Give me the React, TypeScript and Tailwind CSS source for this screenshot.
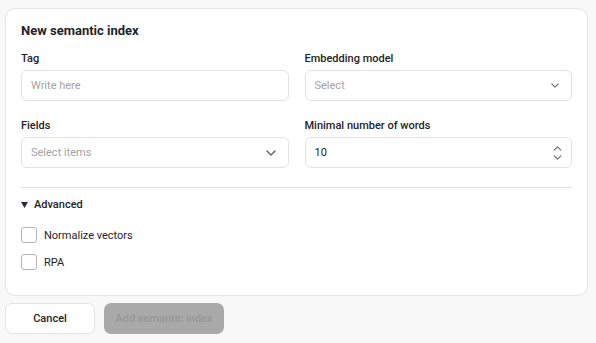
import React from "react";

const Chevron = ({ w, h, up = false, color = "#6b6b6b", sw = 1.5 }: { w: number; h: number; up?: boolean; color?: string; sw?: number }) => (
  <svg width={w} height={h} viewBox="0 0 10 6" fill="none" style={{ display: "block" }}>
    <path d={up ? "M1 5L5 1L9 5" : "M1 1L5 5L9 1"} stroke={color} strokeWidth={sw} strokeLinecap="round" strokeLinejoin="round" />
  </svg>
);

export default function App() {
  return (
    <div className="min-h-[343px] w-[596px] bg-[#f8f8f8] pt-[8px] pl-[5px] pr-[8px]" style={{ fontFamily: "Roboto, 'Noto Sans', sans-serif" }}>
      <div className="rounded-[10px] border border-[#e4e4e4] bg-white px-[15px] pt-[12px] pb-[25px]">
        <div className="text-[13px] font-bold leading-5 text-[#1f2328]">New semantic index</div>
        <div className="mt-[10px] grid grid-cols-2 gap-x-[16px] gap-y-[17px]">
          <div>
            <div className="text-[11px] font-medium leading-4 text-[#1f2328]">Tag</div>
            <div className="mt-[3px] flex h-[31px] items-center rounded-[6px] border border-[#e2e2e2] px-[9px] pt-[2px] text-[11px] text-[#a3a3a3]">Write here</div>
          </div>
          <div>
            <div className="text-[11px] font-medium leading-4 text-[#1f2328]">Embedding model</div>
            <div className="mt-[3px] flex h-[31px] items-center justify-between rounded-[6px] border border-[#e2e2e2] pl-[9px] pr-[12px] text-[11px] text-[#a3a3a3]">
              <span className="pt-[2px]">Select</span>
              <Chevron w={8} h={5} color="#707070" />
            </div>
          </div>
          <div>
            <div className="text-[11px] font-medium leading-4 text-[#1f2328]">Fields</div>
            <div className="mt-[3px] flex h-[31px] items-center justify-between rounded-[6px] border border-[#e2e2e2] pl-[9px] pr-[12px] text-[11px] text-[#a3a3a3]">
              <span className="pt-[2px]">Select items</span>
              <Chevron w={10} h={6} color="#6a6a6a" />
            </div>
          </div>
          <div>
            <div className="text-[11px] font-medium leading-4 text-[#1f2328]">Minimal number of words</div>
            <div className="mt-[3px] flex h-[31px] items-center justify-between rounded-[6px] border border-[#e2e2e2] pl-[9px] pr-[9px] text-[11px] text-[#1f2328]">
              <span className="pt-[2px]">10</span>
              <div className="flex flex-col gap-[4px]">
                <Chevron w={9} h={5} up color="#6a6a6a" sw={1.3} />
                <Chevron w={9} h={5} color="#6a6a6a" sw={1.3} />
              </div>
            </div>
          </div>
        </div>
        <div className="mt-[19px] h-px bg-[#e4e4e4]" />
        <div className="mt-[9px] flex items-center gap-[6px] text-[11px] font-medium leading-4 text-[#1f2328]">
          <svg width="7" height="6" viewBox="0 0 7 6"><path d="M0 0H7L3.5 6Z" fill="#2a2d33" /></svg>
          <span>Advanced</span>
        </div>
        <div className="mt-[14px] flex flex-col gap-[11px]">
          <label className="flex h-[16px] items-center gap-[7px] text-[11px] leading-4 text-[#1f2328]">
            <span className="h-[16px] w-[16px] rounded-[3px] border border-[#b5b5b5] bg-white" />
            <span className="translate-y-px">Normalize vectors</span>
          </label>
          <label className="flex h-[16px] items-center gap-[7px] text-[11px] leading-4 text-[#1f2328]">
            <span className="h-[16px] w-[16px] rounded-[3px] border border-[#b5b5b5] bg-white" />
            <span className="translate-y-px">RPA</span>
          </label>
        </div>
      </div>
      <div className="mt-[7px] flex gap-[9px]">
        <button className="flex h-[31px] w-[90px] items-center justify-center rounded-[7px] border border-[#e4e4e4] bg-white pt-px text-[11px] font-medium text-[#1f2328]">Cancel</button>
        <button className="flex h-[31px] w-[120px] items-center justify-center rounded-[7px] bg-[#a9a9a9] pt-px text-[11px] font-medium text-[#979797]">Add semantic index</button>
      </div>
    </div>
  );
}
